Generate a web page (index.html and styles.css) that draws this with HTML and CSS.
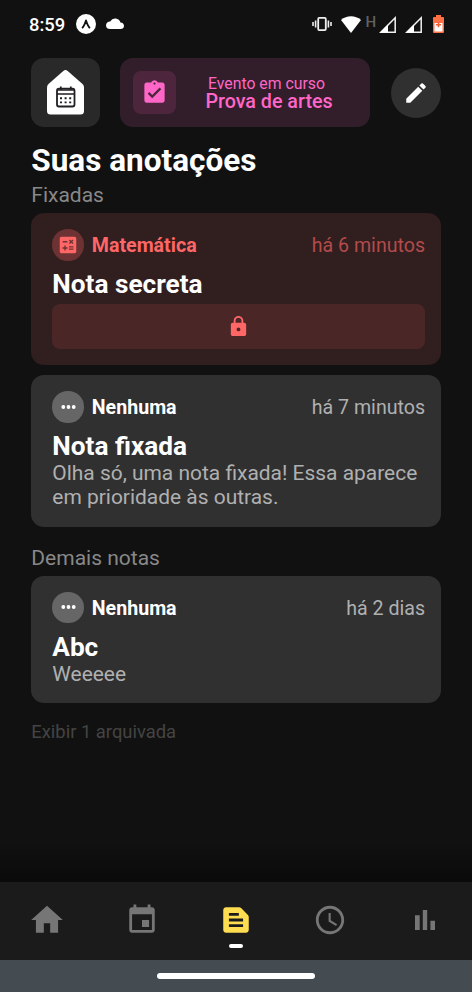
FILE: index.html
```html
<!DOCTYPE html>
<html lang="pt-BR">
<head>
<meta charset="utf-8">
<meta name="viewport" content="width=device-width, initial-scale=1">
<title>Suas anotações</title>
<link rel="stylesheet" href="styles.css">
</head>
<body>
<div class="screen">
  <div class="status">
    <div class="status-left">
      <span class="time">8:59</span>
      <svg class="app-badge" width="20" height="20" viewBox="0 0 20 20"><circle cx="10" cy="10" r="10" fill="#fff"/><path d="M6.600 13.500Q8.200 12 10 6.500 11.800 12 13.400 13.500" fill="none" stroke="#111" stroke-width="1.900" stroke-linecap="round" stroke-linejoin="round"/></svg>
      <svg class="cloud" width="18" height="12" viewBox="0 0 18 12"><path d="M14.500 4.600A5.600 5.600 0 0 0 4.200 3.500 4 4 0 0 0 0 7.400C0 9.700 1.800 11 4 11h10.600c2 0 3.400-1.300 3.400-3.100 0-1.800-1.400-3.200-3.500-3.300z" fill="#fff"/></svg>
    </div>
    <div class="status-right">
      <svg width="20" height="14" viewBox="0 0 20 14"><path d="M1 5v4M3.600 3.500v7M16.400 3.500v7M19 5v4" stroke="#eee" stroke-width="1.600"/><rect x="6.200" y=".9" width="7.600" height="12.200" rx="1" fill="none" stroke="#eee" stroke-width="1.800"/></svg>
      <svg class="wifi" width="20" height="17" viewBox="0 0 20 17"><path d="M0 4C5.700-1 14.300-1 20 4L10 17z" fill="#fff"/></svg>
      <span class="network">H</span>
      <svg class="signal" width="17" height="17" viewBox="0 0 17 17"><path d="M1.800 16.200 16.200 1.800v14.400z" fill="none" stroke="#f2f2f2" stroke-width="1.500"/><path d="M1 16.500 9 8.500v8z" fill="#fff"/></svg>
      <svg class="signal second" width="17" height="17" viewBox="0 0 17 17"><path d="M1.800 16.200 16.200 1.800v14.400z" fill="none" stroke="#f2f2f2" stroke-width="1.500"/><path d="M1 16.500 9 8.500v8z" fill="#fff"/></svg>
      <svg class="battery" width="11" height="18" viewBox="0 0 11 18"><path d="M3 0h5v2h2q1 0 1 1v14q0 1-1 1H1q-1 0-1-1V3q0-1 1-1h2z" fill="#ff7145"/><path d="M1.500 8h8v8.500h-8z" fill="#fff"/><path d="M5.500 7.200v5M3 9.700h5" stroke="#f35f32" stroke-width="1.600"/></svg>
    </div>
  </div>

  <header class="header">
    <div class="logo">
      <svg width="37" height="45" viewBox="0 0 37 45"><path d="M16.300.9q2.200-1.800 4.400 0L35.500 14q1.500 1.400 1.500 3.400V41q0 3.500-3.500 3.500h-30Q0 44.500 0 41V17.400Q0 15.400 1.500 14z" fill="#fff"/><rect x="10" y="18.700" width="17.500" height="17.800" rx="2" fill="none" stroke="#211e24" stroke-width="1.800"/><path d="M10 20h17.500M10 24h17.500M13.800 16.500v3M23.800 16.500v3" stroke="#211e24" stroke-width="1.700"/><path d="M13 28.200h2m2.600 0h2m2.600 0h2M13 32.400h2m2.600 0h2m2.600 0h2" stroke="#211e24" stroke-width="1.900"/></svg>
    </div>
    <div class="event">
      <div class="event-icon">
        <svg width="27" height="27" viewBox="0 0 24 24"><path fill="#ff66c7" d="M19 3h-4.180C14.400 1.840 13.300 1 12 1s-2.400.84-2.820 2H5c-1.100 0-2 .9-2 2v14c0 1.100.9 2 2 2h14c1.100 0 2-.9 2-2V5c0-1.100-.9-2-2-2zm-7 0c.55 0 1 .45 1 1s-.45 1-1 1-1-.45-1-1 .45-1 1-1zm-2 14-4-4 1.410-1.410L10 14.170l6.590-6.590L18 9z"/></svg>
      </div>
      <div class="event-text">
        <span class="event-label">Evento em curso</span>
        <span class="event-name">Prova de artes</span>
      </div>
    </div>
    <div class="edit">
      <svg width="26" height="26" viewBox="0 0 24 24"><path fill="#fff" d="M3 17.250V21h3.750L17.810 9.940l-3.750-3.750zM20.710 7.040a1 1 0 0 0 0-1.410l-2.340-2.340a1 1 0 0 0-1.410 0l-1.830 1.830 3.750 3.750z"/></svg>
    </div>
  </header>

  <main class="content">
    <h1 class="title">Suas anotações</h1>
    <h2 class="section pinned">Fixadas</h2>

    <article class="card math">
      <div class="card-head">
        <span class="subject-icon"><svg width="22" height="22" viewBox="0 0 24 24"><path fill="#ff6666" d="M19 3H5c-1.100 0-2 .9-2 2v14c0 1.100.9 2 2 2h14c1.100 0 2-.9 2-2V5c0-1.100-.9-2-2-2zm-5.970 4.060L14.090 6l1.410 1.410L16.910 6l1.060 1.060-1.410 1.410 1.410 1.410-1.060 1.060-1.410-1.400-1.410 1.410-1.060-1.060 1.410-1.410zM6.250 7.720h5v1.500h-5zM11.500 16h-2v2H8v-2H6v-1.500h2v-2h1.500v2h2zm6.500 1.250h-5v-1.500h5zm0-2.500h-5v-1.500h5z"/></svg></span>
        <span class="subject">Matemática</span>
        <span class="ago">há 6 minutos</span>
      </div>
      <h3 class="note-title">Nota secreta</h3>
      <div class="locked"><svg width="23" height="23" viewBox="0 0 24 24"><path fill="#ff6666" d="M18 8h-1V6c0-2.760-2.240-5-5-5S7 3.240 7 6v2H6c-1.100 0-2 .9-2 2v10c0 1.100.9 2 2 2h12c1.100 0 2-.9 2-2V10c0-1.100-.9-2-2-2zm-6 9c-1.100 0-2-.9-2-2s.9-2 2-2 2 .9 2 2-.9 2-2 2zm3.100-9H8.900V6c0-1.710 1.390-3.100 3.100-3.100s3.100 1.390 3.100 3.100z"/></svg></div>
    </article>

    <article class="card fixed-note">
      <div class="card-head">
        <span class="subject-icon"><svg width="15" height="4" viewBox="0 0 15 4" fill="#fff"><circle cx="2.300" cy="2" r="1.900"/><circle cx="7.500" cy="2" r="1.900"/><circle cx="12.700" cy="2" r="1.900"/></svg></span>
        <span class="subject">Nenhuma</span>
        <span class="ago">há 7 minutos</span>
      </div>
      <h3 class="note-title">Nota fixada</h3>
      <p class="note-text">Olha só, uma nota fixada! Essa aparece<br>em prioridade às outras.</p>
    </article>

    <h2 class="section others">Demais notas</h2>

    <article class="card short">
      <div class="card-head">
        <span class="subject-icon"><svg width="15" height="4" viewBox="0 0 15 4" fill="#fff"><circle cx="2.300" cy="2" r="1.900"/><circle cx="7.500" cy="2" r="1.900"/><circle cx="12.700" cy="2" r="1.900"/></svg></span>
        <span class="subject">Nenhuma</span>
        <span class="ago">há 2 dias</span>
      </div>
      <h3 class="note-title">Abc</h3>
      <p class="note-text">Weeeee</p>
    </article>

    <p class="archived">Exibir 1 arquivada</p>
  </main>

  <div class="fade"></div>
  <nav class="tabs">
    <div class="tab"><svg width="38" height="38" viewBox="0 0 24 24"><path d="M10 20v-6h4v6h5v-8h3L12 3 2 12h3v8z"/></svg></div>
    <div class="tab"><svg width="34" height="34" viewBox="0 0 24 24"><path d="M17 12h-5v5h5zM16 1v2H8V1H6v2H5c-1.110 0-2 .9-2 2v14c0 1.100.89 2 2 2h14c1.100 0 2-.9 2-2V5c0-1.100-.9-2-2-2h-1V1zm3 18H5V8h14z"/></svg></div>
    <div class="tab active"><svg width="34" height="34" viewBox="0 0 24 24"><path d="M20.410 8.410l-4.830-4.830A2 2 0 0 0 14.170 3H5c-1.100 0-2 .9-2 2v14c0 1.100.9 2 2 2h14c1.100 0 2-.9 2-2V9.830a2 2 0 0 0-.59-1.420zM7 7h7v2H7zm10 10H7v-2h10zm0-4H7v-2h10z"/></svg><span class="indicator"></span></div>
    <div class="tab"><svg width="34" height="34" viewBox="0 0 24 24"><path d="M11.990 2C6.470 2 2 6.480 2 12s4.470 10 9.990 10C17.520 22 22 17.520 22 12S17.520 2 11.990 2zM12 20c-4.420 0-8-3.580-8-8s3.580-8 8-8 8 3.580 8 8-3.580 8-8 8zm.5-13H11v6l5.250 3.150.75-1.230-4.500-2.670z"/></svg></div>
    <div class="tab"><svg width="20" height="20" viewBox="0 0 20 20"><path d="M0 5.300h4.700V20H0zM7.800 0h4.400v20H7.800zM15.400 10.800H20V20h-4.600z"/></svg></div>
  </nav>
  <div class="gesture"><span class="gesture-pill"></span></div>
</div>
</body>
</html>
```
FILE: styles.css
```css
* { box-sizing: border-box; margin: 0; padding: 0; }

body {
  background: #111;
  color: #fff;
  font-family: Roboto, "Liberation Sans", sans-serif;
}

svg { display: block; flex: none; }

.screen {
  width: 472px;
  height: 992px;
  display: flex;
  flex-direction: column;
  overflow: hidden;
}

.status {
  height: 58px;
  padding: 12px 28px 0 29px;
  display: flex;
  justify-content: space-between;
  flex: none;
}

.status-left, .status-right {
  height: 24px;
  display: flex;
  align-items: center;
}

.time { font-size: 18.400px; font-weight: 500; width: 47px; }
.cloud { margin-left: 10px; }
.wifi { margin-left: 9px; }
.network {
  margin: -5px 0 0 5px;
  width: 13px;
  color: #626262;
  font-size: 15px;
  font-weight: 500;
}
.signal.second { margin-left: 9.500px; }
.battery { margin-left: 11px; }

.header {
  height: 69px;
  padding: 0 31.300px;
  display: flex;
  align-items: center;
  flex: none;
}

.logo {
  width: 68.500px;
  height: 69px;
  border-radius: 13px;
  background: #292929;
  display: flex;
  align-items: center;
  justify-content: center;
}

.event {
  width: 250px;
  height: 69px;
  margin: 0 20.500px 0 20.500px;
  padding: 0 13px;
  border-radius: 13px;
  background: #311e2a;
  color: #ff66c7;
  display: flex;
  align-items: center;
}

.event-icon {
  width: 42.500px;
  height: 42.500px;
  border-radius: 8px;
  background: #4d263e;
  display: flex;
  align-items: center;
  justify-content: center;
}

.event-text {
  flex: 1;
  padding-left: 5px;
  display: flex;
  flex-direction: column;
  align-items: center;
  line-height: 18px;
}

.event-label { font-size: 15.800px; margin-right: 5px; }
.event-name { font-size: 19.700px; font-weight: 500; }

.edit {
  width: 50px;
  height: 50px;
  border-radius: 50%;
  background: #303030;
  display: flex;
  align-items: center;
  justify-content: center;
}

.content {
  flex: 1;
  padding: 15px 31.300px 0;
}

.title { font-size: 31.500px; line-height: 38px; font-weight: 700; }
.section {
  color: #888;
  font-size: 21px;
  line-height: 25px;
  font-weight: 400;
}
.section.pinned { margin: 3px 0 5px; }
.section.others { margin: 19px 0 5px; }

.card {
  height: 151.500px;
  border-radius: 13px;
  padding: 16px 15.700px 0 21px;
  background: #303030;
}
.card.math { background: #311e1f; }
.card.fixed-note { margin-top: 10.500px; }
.card.short { height: 127px; }

.card-head {
  height: 31.500px;
  display: flex;
  align-items: center;
}

.subject-icon {
  width: 31.500px;
  height: 31.500px;
  border-radius: 50%;
  margin-right: 8px;
  background: #666;
  display: flex;
  align-items: center;
  justify-content: center;
}
.math .subject-icon { background: #6d3233; }
.subject { padding-top: 2px; font-size: 19.600px; font-weight: 700; }
.math .subject { color: #ff6666; }
.ago {
  margin-left: auto;
  padding-top: 2px;
  color: #b0b0b0;
  font-size: 19.600px;
}
.math .ago { color: #b34b4b; }

.note-title {
  margin-top: 8px;
  font-size: 26.200px;
  line-height: 31px;
  font-weight: 700;
}
.short .note-title { margin-top: 9px; }
.note-text {
  margin-top: -1px;
  color: #b0b0b0;
  font-size: 20.950px;
  line-height: 24.500px;
}

.locked {
  height: 45px;
  margin-top: 4px;
  border-radius: 8px;
  background: #4b2627;
  display: flex;
  align-items: center;
  justify-content: center;
}

.archived {
  margin-top: 18px;
  color: #444;
  font-size: 18.400px;
  line-height: 22px;
}

.fade {
  height: 42px;
  flex: none;
  background: linear-gradient(#111, #0a0a0a);
}

.tabs {
  height: 78px;
  flex: none;
  background: #1b1b1b;
  fill: #767676;
  display: grid;
  grid-template-columns: repeat(5, 1fr);
}
.tab {
  position: relative;
  display: flex;
  align-items: center;
  justify-content: center;
  padding-bottom: 3px;
}
.tab.active { fill: #ffdd50; }
.indicator {
  position: absolute;
  bottom: 12px;
  width: 14px;
  height: 4.500px;
  border-radius: 3px;
  background: #fff;
}

.gesture {
  height: 32px;
  flex: none;
  background: #444c51;
  display: flex;
  align-items: center;
  justify-content: center;
}
.gesture-pill {
  width: 158px;
  height: 6px;
  border-radius: 3px;
  background: #fff;
}
```
